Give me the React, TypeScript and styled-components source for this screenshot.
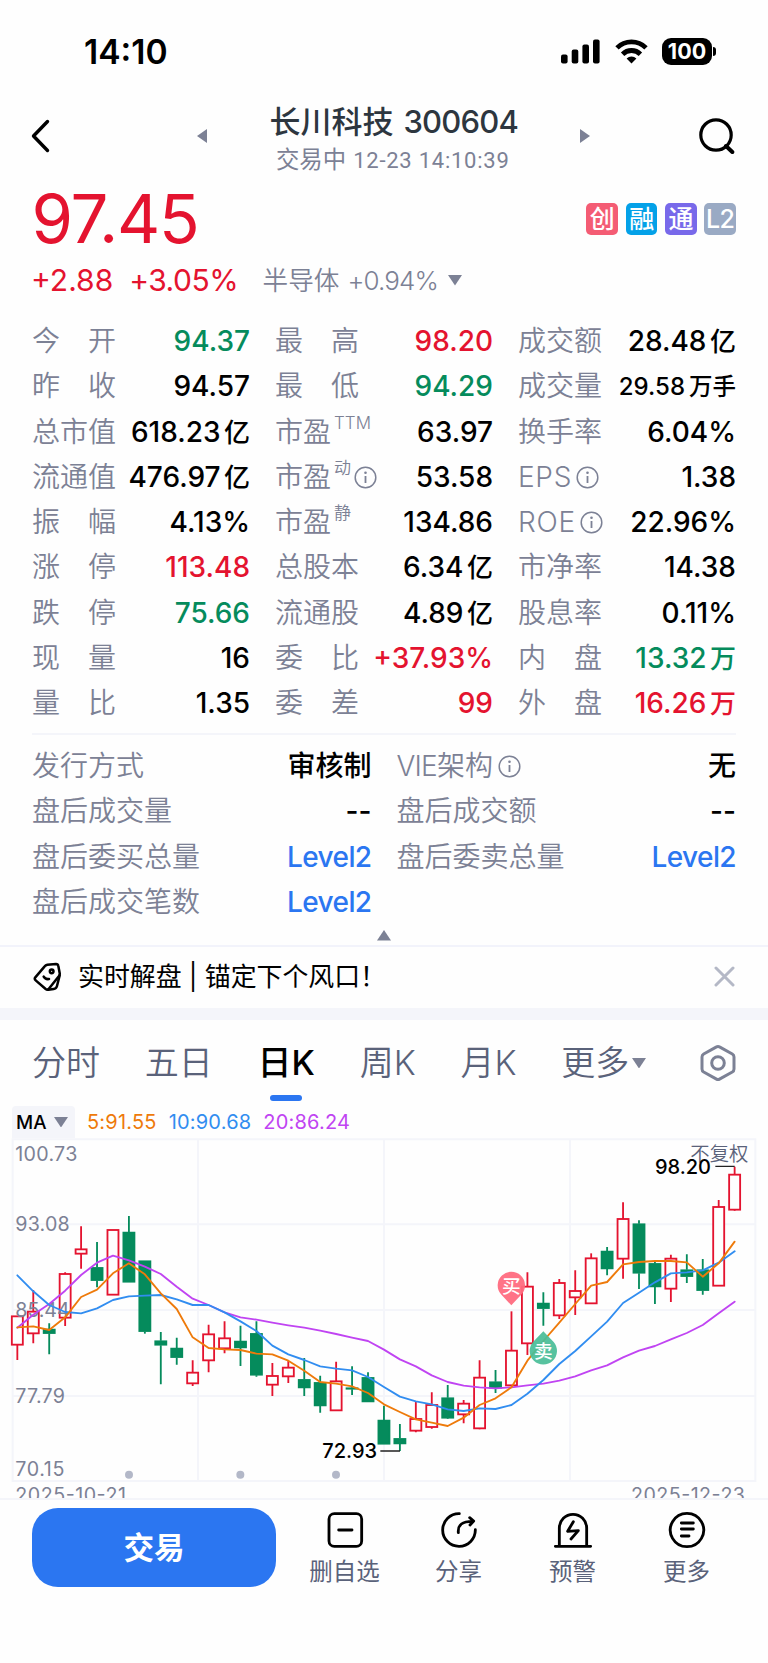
import React from 'react';
import styled, { createGlobalStyle } from 'styled-components';

const FONT = 'Inter, "Noto Sans CJK SC", sans-serif';
const RED = '#e4132f';
const GREEN = '#058b5c';
const BLUE = '#2b76f1';
const GRAY = '#7c8195';
const SLATE = '#5a627a';
const LINE = '#f4f5fa';

type Tone = 'up' | 'down' | 'link' | 'flat';
const toneColor: Record<Tone, string> = { up: RED, down: GREEN, link: BLUE, flat: '#000' };

const GlobalStyle = createGlobalStyle`
  * { box-sizing: border-box; }
  body { margin: 0; background: #fefefe; font-family: ${FONT}; color: #000; }
`;

const Screen = styled.main`
  width: 768px;
  height: 1663px;
  overflow: hidden;
  display: flex;
  flex-direction: column;
  background: #fefefe;
`;

/* status bar */
const StatusBar = styled.div`
  flex: none;
  display: flex;
  align-items: center;
  justify-content: space-between;
  height: 103px;
  padding: 0 52px 0 84px;
`;
const Clock = styled.span`
  font-size: 33.6px;
  font-weight: 600;
`;
const StatusIcons = styled.div`
  display: flex;
  align-items: center;
  gap: 15px;
`;
const Battery = styled.div`
  display: flex;
  align-items: center;
  gap: 1px;
  margin-left: -1px;
`;
const BatteryBody = styled.div`
  width: 50px;
  height: 27px;
  border-radius: 9px;
  background: #000;
  color: #fff;
  font-size: 21.5px;
  font-weight: 700;
  line-height: 27px;
  text-align: center;
`;
const BatteryCap = styled.div`
  width: 3px;
  height: 9px;
  border-radius: 0 4px 4px 0;
  background: #000;
`;

/* header */
const Header = styled.header`
  flex: none;
  display: flex;
  align-items: center;
  justify-content: space-between;
  height: 77px;
  padding: 0 33px 0 31px;
`;
const HeaderSide = styled.div<{ $end?: boolean }>`
  display: flex;
  align-items: center;
  justify-content: space-between;
  flex-direction: ${(p) => (p.$end ? 'row-reverse' : 'row')};
  width: ${(p) => (p.$end ? 154.5 : 176)}px;
  padding-bottom: 12px;
`;
const TitleBlock = styled.div`
  display: flex;
  flex-direction: column;
  align-items: center;
`;
const Title = styled.h1`
  margin: 0;
  color: #2d363f;
  font-size: 31px;
  font-weight: 500;
  line-height: 38px;
  white-space: nowrap;
`;
const Code = styled.span`
  letter-spacing: -0.8px;
  margin-left: 10px;
`;
const Subtitle = styled.div`
  margin-left: -2px;
  color: ${GRAY};
  font-family: Roboto, "Noto Sans CJK SC", sans-serif;
  font-size: 23.4px;
  line-height: 38px;
  white-space: nowrap;
`;
const Stamp = styled.span`
  font-size: 22px;
  letter-spacing: 0.75px;
  margin-left: 7px;
`;

/* quote */
const QuoteRow = styled.div`
  flex: none;
  display: flex;
  align-items: center;
  justify-content: space-between;
  height: 77px;
  padding: 0 32px 0 31.5px;
`;
const Price = styled.span`
  color: ${RED};
  font-size: 67px;
  letter-spacing: -1.2px;
  line-height: 77px;
`;
const Badges = styled.div`
  display: flex;
  gap: 7.7px;
`;
const Badge = styled.span<{ $bg: string }>`
  width: 31.7px;
  height: 32px;
  border-radius: 5px;
  background: ${(p) => p.$bg};
  color: #fff;
  font-size: 25px;
  font-weight: 500;
  letter-spacing: -0.5px;
  line-height: 32px;
  text-align: center;
`;
const ChangeRow = styled.div`
  flex: none;
  display: flex;
  align-items: center;
  height: 61.8px;
  padding: 0 0 14.8px 31px;
  line-height: 47px;
  white-space: nowrap;
`;
const Change = styled.span<{ $gap: number; $track?: number }>`
  color: ${RED};
  font-size: 30px;
  letter-spacing: ${(p) => p.$track ?? 0}px;
  margin-right: ${(p) => p.$gap}px;
`;
const Sector = styled.span`
  color: ${GRAY};
  font-size: 25.6px;
  font-weight: 360;
`;
const SectorChange = styled.span`
  font-size: 26px;
  letter-spacing: -0.9px;
  margin: 0 10px 0 8px;
`;

/* metrics */
const Metrics = styled.section<{ $cols: number }>`
  flex: none;
  display: grid;
  grid-template-columns: repeat(${(p) => p.$cols}, 1fr);
  grid-auto-rows: 45.3px;
  column-gap: 25px;
  padding: 0 32px;
`;
const Metric = styled.div`
  display: flex;
  align-items: center;
  justify-content: space-between;
  line-height: 45px;
  font-size: 28px;
  white-space: nowrap;
`;
const Label = styled.span`
  display: flex;
  align-items: center;
  color: ${GRAY};
  font-weight: 360;
`;
const Latin = styled.span<{ $track: number }>`
  letter-spacing: ${(p) => p.$track}px;
  font-weight: 320;
`;
const Sup = styled.sup`
  align-self: flex-start;
  margin: -9px 0 0 3px;
  font-size: 17px;
  vertical-align: baseline;
`;
const Value = styled.span<{ $tone: Tone; $small?: boolean }>`
  color: ${(p) => toneColor[p.$tone]};
  font-size: ${(p) => (p.$small ? 24 : 28)}px;
  font-weight: 500;
  letter-spacing: ${(p) => (p.$tone === 'link' ? -0.6 : 0)}px;
`;
const Unit = styled.span<{ $small?: boolean }>`
  font-size: ${(p) => (p.$small ? 23.5 : 26)}px;
  margin-left: ${(p) => (p.$small ? 4 : 3.5)}px;
`;
const Divider = styled.hr`
  flex: none;
  width: 704px;
  height: 2px;
  margin: 6.5px 32px 8.9px;
  border: 0;
  background: ${LINE};
`;
const Collapse = styled.button`
  flex: none;
  display: flex;
  justify-content: center;
  width: 100%;
  height: 20.1px;
  padding: 5px 0 0;
  border: 0;
  background: none;
`;

/* banner */
const Banner = styled.div`
  flex: none;
  display: flex;
  align-items: center;
  height: 75px;
  padding: 0 33px 2px 32px;
  border-top: 2px solid #f2f3fb;
  border-bottom: 12px solid ${LINE};
  font-size: 25.9px;
  line-height: 59px;
  white-space: pre;
`;
const BannerText = styled.span`
  flex: 1;
  margin-left: 16px;
`;

/* tabs */
const Tabs = styled.nav`
  flex: none;
  display: flex;
  align-items: center;
  height: 86px;
  padding: 0 32px;
  gap: 44.8px;
`;
const Tab = styled.span<{ $active?: boolean }>`
  position: relative;
  display: flex;
  flex: none;
  align-items: center;
  gap: 3px;
  color: ${(p) => (p.$active ? '#000' : SLATE)};
  font-size: 34px;
  font-weight: ${(p) => (p.$active ? 500 : 350)};
  line-height: 86px;
  white-space: nowrap;
  &::after {
    content: '';
    display: ${(p) => (p.$active ? 'block' : 'none')};
    position: absolute;
    left: calc(50% - 16px);
    bottom: 5px;
    width: 32px;
    height: 6px;
    border-radius: 3px;
    background: ${BLUE};
  }
`;
const SettingsIcon = styled.svg`
  flex: none;
  margin-left: auto;
`;

/* chart */
const Indicators = styled.div`
  flex: none;
  display: flex;
  align-items: center;
  height: 32px;
  padding-left: 12px;
  font-size: 20px;
  line-height: 32px;
`;
const MaButton = styled.button`
  display: flex;
  align-items: center;
  justify-content: space-between;
  width: 63px;
  height: 32px;
  margin-right: 12px;
  padding: 0 7px 0 4px;
  border: 0;
  border-radius: 4px 4px 0 0;
  background: ${LINE};
  color: #000;
  font: 500 18.8px ${FONT};
`;
const Ma = styled.span<{ $color: string }>`
  color: ${(p) => p.$color};
  letter-spacing: 0.2px;
  margin-right: 12px;
`;
const ChartSvg = styled.svg`
  flex: none;
  display: block;
  font-family: ${FONT};
`;

/* bottom bar */
const BottomBar = styled.footer`
  flex: 1;
  display: flex;
  align-items: flex-start;
  border-top: 2px solid ${LINE};
  padding: 8px 24px 0 32px;
  background: #fefefe;
`;
const TradeButton = styled.button`
  width: 244px;
  height: 79px;
  margin-right: 11.5px;
  padding: 0;
  border: 0;
  border-radius: 26px;
  background: ${BLUE};
  color: #fff;
  font: 600 30.6px/79px ${FONT};
`;
const Action = styled.button`
  display: flex;
  flex-direction: column;
  align-items: center;
  width: 114px;
  padding: 2px 0 0;
  border: 0;
  background: none;
  color: ${SLATE};
  font: 380 23.5px/44px ${FONT};
`;

const Triangle = ({ w, h, points }: { w: number; h: number; points: string }) => (
  <svg width={w} height={h} viewBox="0 0 10 10" preserveAspectRatio="none">
    <polygon points={points} fill={GRAY} />
  </svg>
);
const Down = ({ w = 14, h = 10.5 }) => <Triangle w={w} h={h} points="0,0 10,0 5,10" />;

const InfoSvg = styled.svg<{ $gap: number }>`
  margin-left: ${(p) => p.$gap}px;
`;
const Info = ({ gap = 5 }) => (
  <InfoSvg $gap={gap} width="23" height="23" viewBox="0 0 23 23" fill="none" stroke={GRAY}>
    <circle cx="11.5" cy="11.5" r="10.3" strokeWidth="1.5" />
    <path d="M11.5 10v7" strokeWidth="1.8" />
    <circle cx="11.5" cy="6.8" r="1.3" fill={GRAY} stroke="none" />
  </InfoSvg>
);

interface Item {
  label: string;
  latin?: string;
  sup?: string;
  info?: number;
  value: string;
  unit?: string;
  tone?: Tone;
  small?: boolean;
}

const quoteItems: Item[] = [
  { label: '今\u3000开', value: '94.37', tone: 'down' },
  { label: '最\u3000高', value: '98.20', tone: 'up' },
  { label: '成交额', value: '28.48', unit: '亿' },
  { label: '昨\u3000收', value: '94.57' },
  { label: '最\u3000低', value: '94.29', tone: 'down' },
  { label: '成交量', value: '29.58', unit: '万手', small: true },
  { label: '总市值', value: '618.23', unit: '亿' },
  { label: '市盈', sup: 'TTM', value: '63.97' },
  { label: '换手率', value: '6.04%' },
  { label: '流通值', value: '476.97', unit: '亿' },
  { label: '市盈', sup: '动', info: 3, value: '53.58' },
  { label: '', latin: 'EPS', info: 4, value: '1.38' },
  { label: '振\u3000幅', value: '4.13%' },
  { label: '市盈', sup: '静', value: '134.86' },
  { label: '', latin: 'ROE', info: 4, value: '22.96%' },
  { label: '涨\u3000停', value: '113.48', tone: 'up' },
  { label: '总股本', value: '6.34', unit: '亿' },
  { label: '市净率', value: '14.38' },
  { label: '跌\u3000停', value: '75.66', tone: 'down' },
  { label: '流通股', value: '4.89', unit: '亿' },
  { label: '股息率', value: '0.11%' },
  { label: '现\u3000量', value: '16' },
  { label: '委\u3000比', value: '+37.93%', tone: 'up' },
  { label: '内\u3000盘', value: '13.32', unit: '万', tone: 'down' },
  { label: '量\u3000比', value: '1.35' },
  { label: '委\u3000差', value: '99', tone: 'up' },
  { label: '外\u3000盘', value: '16.26', unit: '万', tone: 'up' },
];

const extraItems: Item[] = [
  { label: '发行方式', value: '审核制' },
  { label: '架构', latin: 'VIE', info: 5, value: '无' },
  { label: '盘后成交量', value: '--' },
  { label: '盘后成交额', value: '--' },
  { label: '盘后委买总量', value: 'Level2', tone: 'link' },
  { label: '盘后委卖总量', value: 'Level2', tone: 'link' },
  { label: '盘后成交笔数', value: 'Level2', tone: 'link' },
];

const MetricCell = ({ label, latin, sup, info, value, unit, tone = 'flat', small }: Item) => (
  <Metric>
    <Label>
      {latin && <Latin $track={label ? -0.8 : 0.7}>{latin}</Latin>}
      {label}
      {sup && <Sup>{sup}</Sup>}
      {info !== undefined && <Info gap={info} />}
    </Label>
    <Value $tone={tone} $small={small}>
      {value}
      {unit && <Unit $small={small}>{unit}</Unit>}
    </Value>
  </Metric>
);

/* candles: rising flag, body top, body bottom, wick top, wick bottom (third-pixel units) */
const candles: [number, number, number, number, number][] = [
  [1, 559, 644, 559, 690], [1, 545, 610, 480, 640], [0, 597, 611, 580, 673], [1, 432, 563, 427, 588],
  [1, 358, 371, 289, 416], [0, 412, 452, 336, 472], [1, 300, 494, 300, 494], [0, 306, 457, 258, 457],
  [0, 392, 605, 392, 611], [0, 632, 646, 606, 763], [0, 654, 683, 623, 704], [1, 728, 760, 691, 768],
  [1, 613, 691, 584, 727], [1, 625, 655, 574, 670], [0, 633, 654, 587, 708], [0, 610, 736, 574, 740],
  [1, 738, 764, 699, 798], [1, 713, 739, 692, 759], [0, 748, 774, 684, 798], [0, 757, 828, 737, 848],
  [1, 754, 841, 695, 843], [0, 773, 778, 709, 795], [0, 742, 816, 727, 816], [0, 870, 943, 827, 943],
  [0, 925, 942, 882, 963], [1, 867, 902, 815, 907], [1, 825, 891, 787, 896], [0, 803, 865, 765, 867],
  [1, 821, 853, 810, 880], [1, 743, 895, 691, 898], [0, 755, 775, 720, 789], [1, 662, 766, 544, 766],
  [1, 470, 640, 427, 675], [0, 519, 536, 487, 587], [1, 459, 556, 447, 567], [1, 483, 502, 421, 555],
  [1, 385, 520, 370, 520], [0, 363, 417, 351, 436], [1, 267, 386, 217, 446], [0, 281, 430, 271, 477],
  [0, 400, 471, 392, 522], [1, 386, 476, 374, 516], [0, 419, 440, 373, 459], [0, 419, 482, 387, 494],
  [1, 231, 467, 210, 467], [1, 134, 239, 110, 242],
];
const ma5 = [592, 589, 600, 562, 501, 479, 430, 400, 433, 490, 537, 622, 654, 658, 660, 671, 673, 692, 722, 756, 761, 769, 789, 823, 846, 868, 878, 888, 863, 825, 805, 772, 692, 633, 578, 522, 467, 456, 403, 396, 393, 393, 397, 440, 400, 335];
const ma10 = [436, 484, 525, 546, 550, 535, 510, 499, 497, 495, 508, 525, 525, 547, 574, 603, 647, 673, 690, 709, 716, 721, 741, 771, 800, 814, 823, 838, 843, 835, 837, 825, 791, 750, 702, 663, 619, 575, 519, 488, 457, 430, 427, 421, 398, 364];
const ma20 = [593, 554, 522, 482, 435, 398, 377, 391, 410, 432, 470, 506, 525, 547, 562, 569, 578, 586, 593, 602, 612, 623, 633, 659, 688, 709, 736, 756, 767, 772, 775, 772, 766, 761, 752, 739, 721, 706, 682, 662, 648, 628, 609, 585, 550, 515];

const cx = (i: number) => 52 + i * 47.82;
const line = (ys: number[]) => ys.map((y, i) => `${cx(i).toFixed(1)},${y}`).join(' ');

const KLineChart = () => (
  <ChartSvg width="768" height="360" viewBox="0 24 2304 1080">
    <g stroke={LINE} strokeWidth="6" fill="none">
      <path d="M38 28H2266V1053H38Z" />
      <path d="M594 28V1053M1152 28V1053M1710 28V1053M38 283H2266M38 540H2266M38 798H2266" />
    </g>
    <g fill="#b3b8c8">
      <circle cx="387" cy="1034" r="12" />
      <circle cx="721" cy="1034" r="12" />
      <circle cx="1008" cy="1034" r="12" />
    </g>
    {candles.map(([up, top, bottom, high, low], i) => {
      const x = cx(i);
      const color = up ? RED : GREEN;
      return (
        <g key={i} stroke={color} strokeWidth="5.5">
          <path d={`M${x} ${high}V${top}M${x} ${bottom}V${low}`} />
          <rect
            x={x - 16.5}
            y={top + (up ? 0 : 2)}
            width="33"
            height={Math.max(bottom - top - (up ? 0 : 4), 1)}
            fill={up ? '#fefefe' : color}
          />
        </g>
      );
    })}
    <g fill={GRAY} fontSize="59">
      <text x="46" y="92" textLength="186">100.73</text>
      <text x="46" y="303" textLength="163">93.08</text>
      <text x="46" y="562" textLength="163">85.44</text>
      <text x="46" y="820" textLength="149">77.79</text>
      <text x="46" y="1037" textLength="147">70.15</text>
      <text x="46" y="1115" textLength="332">2025-10-21</text>
      <text x="1893" y="1115" textLength="342">2025-12-23</text>
    </g>
    <text x="2071" y="94" fontSize="58" fill={SLATE} fontWeight="350">不复权</text>
    <g fill="none" strokeWidth="5.6" strokeLinejoin="round" strokeLinecap="round">
      <polyline points={line(ma20)} stroke="#c044f2" />
      <polyline points={line(ma10)} stroke="#318df0" />
      <polyline points={line(ma5)} stroke="#ee7a0a" />
    </g>
    <g stroke="#222" strokeWidth="4">
      <path d="M1141 963H1200M2146 109H2204" />
    </g>
    <g fontSize="60" fontWeight="500">
      <text x="967" y="984" textLength="164">72.93</text>
      <text x="1965" y="131" textLength="168">98.20</text>
    </g>
    <g fontSize="56" fontWeight="500" fill="#fff" textAnchor="middle">
      <path d="M1534 526L1503 493A41 41 0 1 1 1565 493Z" fill="#ff6b80" opacity="0.95" />
      <text x="1534" y="488">买</text>
      <path d="M1630 604L1599 636A41 41 0 1 0 1661 636Z" fill="#4abd98" opacity="0.93" />
      <text x="1630" y="683">卖</text>
    </g>
  </ChartSvg>
);

const actions: { name: string; x: number; d: string }[] = [
  { name: '删自选', x: 28, d: 'M56 29H122A16 16 0 0 1 138 45V111A16 16 0 0 1 122 127H56A16 16 0 0 1 40 111V45A16 16 0 0 1 56 29ZM69 78H109' },
  { name: '分享', x: 371, d: 'M432 29A49 49 0 1 0 480 77M429 86C427 62 441 52 472 52M463 41L475 51L464 63' },
  { name: '预警', x: 714, d: 'M733 126V72A41 41 0 0 1 815 72V126M721 127H827M775 53L758 82L790 80L768 105' },
  { name: '更多', x: 1056, d: 'M1116 28A50 50 0 1 1 1115.9 28ZM1099 57H1135M1099 75H1135M1099 96H1122' },
];

export default function App() {
  return (
    <Screen>
      <GlobalStyle />
      <StatusBar>
        <Clock>14:10</Clock>
        <StatusIcons>
          <svg width="39" height="25" viewBox="0 0 39 25">
            <rect x="0" y="15.5" width="6.6" height="9" rx="2" />
            <rect x="10.7" y="10.5" width="6.6" height="14" rx="2" />
            <rect x="21.4" y="5.5" width="6.6" height="19" rx="2" />
            <rect x="32" y="0.5" width="6.6" height="24" rx="2" />
          </svg>
          <svg width="33" height="25" viewBox="0 0 33 25" fill="none" stroke="#000" strokeWidth="4.8">
            <path d="M2 8.9A20.6 20.6 0 0 1 31 8.9" />
            <path d="M7.6 15.2A12.6 12.6 0 0 1 25.4 15.2" />
            <path d="M16.5 24.5L11.6 19.4A7 7 0 0 1 21.4 19.4Z" fill="#000" stroke="none" />
          </svg>
          <Battery>
            <BatteryBody>100</BatteryBody>
            <BatteryCap />
          </Battery>
        </StatusIcons>
      </StatusBar>

      <Header>
        <HeaderSide>
          <svg width="20" height="34" viewBox="0 0 20 34" fill="none" stroke="#000" strokeWidth="3.4" strokeLinecap="round" strokeLinejoin="round">
            <path d="M16.5 2.5L2.5 17L16.5 31.5" />
          </svg>
          <Triangle w={10} h={14} points="10,0 10,10 0,5" />
        </HeaderSide>
        <TitleBlock>
          <Title>
            长川科技<Code>300604</Code>
          </Title>
          <Subtitle>
            交易中<Stamp>12-23 14:10:39</Stamp>
          </Subtitle>
        </TitleBlock>
        <HeaderSide $end>
          <svg width="36" height="36" viewBox="0 0 36 36" fill="none" stroke="#000" strokeWidth="3.2">
            <circle cx="17" cy="17" r="15.2" />
            <path d="M27 28L33.3 34" strokeWidth="4" strokeLinecap="round" />
          </svg>
          <Triangle w={10} h={14} points="0,0 0,10 10,5" />
        </HeaderSide>
      </Header>

      <QuoteRow>
        <Price>97.45</Price>
        <Badges>
          <Badge $bg="#f45c74">创</Badge>
          <Badge $bg="#04a1e8">融</Badge>
          <Badge $bg="#7869ea">通</Badge>
          <Badge $bg="#9aaac4">L2</Badge>
        </Badges>
      </QuoteRow>
      <ChangeRow>
        <Change $gap={16}>+2.88</Change>
        <Change $gap={24.5} $track={-0.5}>+3.05%</Change>
        <Sector>
          半导体<SectorChange>+0.94%</SectorChange>
        </Sector>
        <Down />
      </ChangeRow>
      <Metrics $cols={3}>
        {quoteItems.map((item, i) => (
          <MetricCell key={i} {...item} />
        ))}
      </Metrics>
      <Divider />
      <Metrics $cols={2}>
        {extraItems.map((item, i) => (
          <MetricCell key={i} {...item} />
        ))}
      </Metrics>
      <Collapse>
        <Triangle w={14} h={10.5} points="5,0 10,10 0,10" />
      </Collapse>

      <Banner>
        <svg width="30" height="30" viewBox="21 36 90 90" fill="none" stroke="#000" strokeWidth="7.5" strokeLinejoin="round" strokeLinecap="round">
          <path d="M31 82L59 49Q62 45 67 44L93 42Q99 42 100 48L104 69Q105 74 102 78L71 117Q67 121 62 117L32 91Q27 87 31 82Z" />
          <path d="M104 76L96 108Q94 116 86 117L70 119" />
          <circle cx="80" cy="64" r="5.5" />
          <path d="M56 80Q61 89 72 87" />
        </svg>
        <BannerText>实时解盘 | 锚定下个风口！</BannerText>
        <svg width="21" height="21" viewBox="0 0 21 21" fill="none" stroke="#b4b8c6" strokeWidth="3" strokeLinecap="round">
          <path d="M2 2L19 19M19 2L2 19" />
        </svg>
      </Banner>

      <Tabs>
        <Tab>分时</Tab>
        <Tab>五日</Tab>
        <Tab $active>日K</Tab>
        <Tab>周K</Tab>
        <Tab>月K</Tab>
        <Tab>
          更多
          <Down />
        </Tab>
        <SettingsIcon width="36" height="38" viewBox="0 0 36 38" fill="none" stroke={GRAY} strokeWidth="3" strokeLinejoin="round">
          <path d="M16.5 2.9Q18 2 19.5 2.9L32.3 10Q34 11 34 13V25Q34 27 32.3 28L19.5 35.1Q18 36 16.5 35.1L3.7 28Q2 27 2 25V13Q2 11 3.7 10Z" />
          <circle cx="18" cy="19" r="6.3" />
        </SettingsIcon>
      </Tabs>

      <Indicators>
        <MaButton>
          MA
          <Down />
        </MaButton>
        <Ma $color="#ee7a0a">5:91.55</Ma>
        <Ma $color="#318df0">10:90.68</Ma>
        <Ma $color="#c044f2">20:86.24</Ma>
      </Indicators>
      <KLineChart />

      <BottomBar>
        <TradeButton>交易</TradeButton>
        {actions.map(({ name, x, d }) => (
          <Action key={name}>
            <svg width="40" height="40" viewBox={`${x} 18 120 120`} fill="none" stroke="#000" strokeWidth="8.5" strokeLinecap="round" strokeLinejoin="round">
              <path d={d} />
            </svg>
            {name}
          </Action>
        ))}
      </BottomBar>
    </Screen>
  );
}
